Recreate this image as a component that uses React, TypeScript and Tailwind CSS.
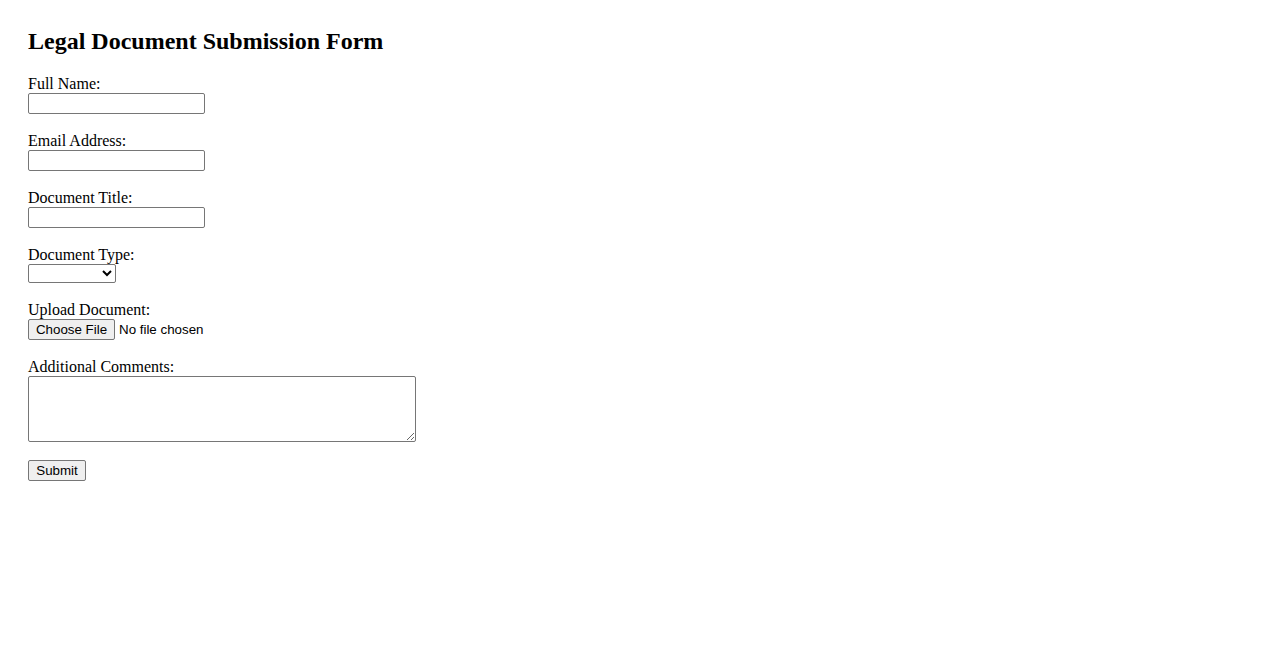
const fields = [
  { label: "Full Name:", id: "fullName", type: "text" },
  { label: "Email Address:", id: "email", type: "email" },
  { label: "Document Title:", id: "docTitle", type: "text" },
];

const inputClass =
  "block h-[21px] w-[177px] rounded-[2px] border border-[#767676] bg-white px-[2px] py-px text-[13.333px] [font-family:'Liberation_Sans',Arial,sans-serif]";

function App() {
  return (
    <div className="min-h-screen bg-white px-7 pt-[27px] text-black [font-family:'Liberation_Serif','Times_New_Roman',serif]">
      <h2 className="mb-[20px] text-[24px] font-bold leading-[28px]">Legal Document Submission Form</h2>

      <form className="flex flex-col items-start text-[16px] leading-[18px]" onSubmit={(e) => e.preventDefault()}>
        {fields.map((field) => (
          <div key={field.id} className="mb-[18px] flex flex-col items-start">
            <label htmlFor={field.id}>{field.label}</label>
            <input id={field.id} type={field.type} className={inputClass} />
          </div>
        ))}

        <div className="mb-[18px] flex flex-col items-start">
          <label htmlFor="docType">Document Type:</label>
          <select
            id="docType"
            className="block h-[19px] w-[88px] rounded-[2px] border border-[#767676] bg-white text-[13.333px] [font-family:'Liberation_Sans',Arial,sans-serif]"
          >
            <option value=""></option>
            <option value="contract">Contract</option>
            <option value="affidavit">Affidavit</option>
            <option value="agreement">Agreement</option>
          </select>
        </div>

        <div className="mb-[18px] flex flex-col items-start">
          <label htmlFor="upload">Upload Document:</label>
          <input
            id="upload"
            type="file"
            className="block h-[21px] text-[13.333px] leading-[19px] [font-family:'Liberation_Sans',Arial,sans-serif] file:mr-[4px] file:h-[21px] file:w-[87px] file:rounded-[2px] file:border file:border-solid file:border-[#767676] file:bg-[#efefef] file:px-0 file:text-[13.333px] file:leading-[17px] file:text-black"
          />
        </div>

        <div className="mb-[18px] flex flex-col items-start">
          <label htmlFor="comments">Additional Comments:</label>
          <textarea
            id="comments"
            className="block h-[66px] w-[388px] rounded-[2px] border border-[#767676] bg-white px-[2px] py-px text-[13.333px] [font-family:'Liberation_Mono',monospace]"
          />
        </div>

        <button
          type="submit"
          className="h-[21px] w-[58px] rounded-[2px] border border-[#767676] bg-[#efefef] text-[13.333px] leading-[19px] text-black [font-family:'Liberation_Sans',Arial,sans-serif] hover:bg-[#e5e5e5]"
        >
          Submit
        </button>
      </form>
    </div>
  );
}

export default App;
